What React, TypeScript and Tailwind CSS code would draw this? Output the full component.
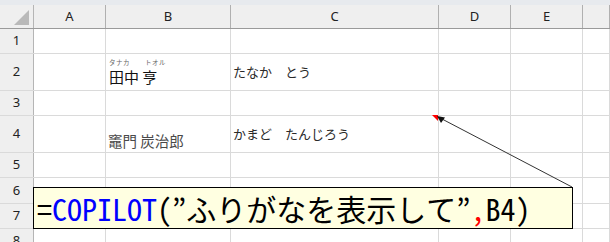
import React from "react";

const jp = "font-['Noto_Sans_CJK_JP',sans-serif]";

const cols = [
  { label: "A", w: "w-[72px]" },
  { label: "B", w: "w-[125px]" },
  { label: "C", w: "w-[208px]" },
  { label: "D", w: "w-[72px]" },
  { label: "E", w: "w-[72px]" },
  { label: "", w: "flex-1" },
];

const rows = [
  { n: 1, h: "h-[25px]" },
  { n: 2, h: "h-[37px]" },
  { n: 3, h: "h-[25px]" },
  { n: 4, h: "h-[37px]" },
  { n: 5, h: "h-[25px]" },
  { n: 6, h: "h-[26px]" },
  { n: 7, h: "h-[25px]" },
  { n: 8, h: "h-[25px]" },
];

function CellContent({ row, col }: { row: number; col: number }) {
  if (row === 2 && col === 1) {
    // name with its phonetic guide above
    return (
      <div className="flex h-full flex-col justify-end pb-[5px] pl-[3px]">
        <div className={`${jp} mb-[4px] flex text-[6.5px] leading-[6px] text-[#666] tracking-[0.5px]`}>
          <span>タナカ</span>
          <span className="ml-[15px]">トオル</span>
        </div>
        <div className={`${jp} text-[15px] leading-[16px] text-[#111]`}>田中 亨</div>
      </div>
    );
  }
  if (row === 4 && col === 1) {
    return (
      <div className="flex h-full items-end pb-[2px] pl-[2px]">
        <div className={`${jp} text-[14.5px] leading-[18px] text-[#4a4a4a]`}>竈門 炭治郎</div>
      </div>
    );
  }
  if (row === 2 && col === 2) {
    return (
      <div className="flex h-full items-center pl-[2px]">
        <div className={`${jp} text-[13px] leading-[16px] text-[#2a2a2a]`}>たなか　とう</div>
      </div>
    );
  }
  if (row === 4 && col === 2) {
    return (
      <div className="flex h-full items-center pl-[2px]">
        <div className={`${jp} text-[13px] leading-[16px] text-[#2a2a2a]`}>かまど　たんじろう</div>
      </div>
    );
  }
  return null;
}

export default function App() {
  return (
    <div className="relative h-[242px] w-[610px] overflow-hidden bg-white">
      {/* ribbon edge */}
      <div className="h-[5px] bg-[#e7eaee]" />

      {/* column headers */}
      <div className="flex h-[24px] border-b border-[#9a9a9a] bg-[#efefef]">
        <div className="relative w-[34px] border-r border-[#b5b5b5]">
          <svg className="absolute left-[14px] top-[5px]" width="16" height="16" viewBox="0 0 16 16">
            <polygon points="15,0 15,15 0,15" fill="#b9b9b9" />
          </svg>
        </div>
        {cols.map((c, i) => (
          <div
            key={i}
            className={`${c.w} flex items-center justify-center border-r border-[#b0b0b0] font-['Noto_Sans',sans-serif] text-[13px] text-[#222]`}
          >
            {c.label}
          </div>
        ))}
      </div>

      {/* grid body */}
      {rows.map((r) => (
        <div key={r.n} className={`flex ${r.h} border-b border-[#dadada]`}>
          <div className="flex w-[34px] items-center justify-center border-r border-[#b5b5b5] bg-[#efefef] font-['Noto_Sans',sans-serif] text-[13px] text-[#222]">
            {r.n}
          </div>
          {cols.map((c, i) => (
            <div key={i} className={`${c.w} border-r border-[#dadada]`}>
              <CellContent row={r.n} col={i} />
            </div>
          ))}
        </div>
      ))}

      {/* comment marker and leader line */}
      <svg className="pointer-events-none absolute inset-0" width="610" height="242">
        <polygon points="432,115 438,115 438,121" fill="#ff0000" />
        <line x1="572" y1="187" x2="442" y2="119" stroke="#333" strokeWidth="1" />
        <polygon points="437,116 445,117.5 441,123" fill="#111" />
      </svg>

      {/* comment box */}
      <div className="absolute left-[33px] top-[187px] flex h-[42px] w-[540px] items-center border border-black bg-[#ffffe1] pl-[3px] font-['Noto_Sans_Mono_CJK_JP','Noto_Sans_CJK_JP',monospace] text-[30px] leading-none text-black">
        <span>=</span>
        <span className="text-[#0000ff]">COPILOT</span>
        <span>(”ふりがなを表示して”</span>
        <span className="text-[#ff0000]">,</span>
        <span>B4)</span>
      </div>
    </div>
  );
}
